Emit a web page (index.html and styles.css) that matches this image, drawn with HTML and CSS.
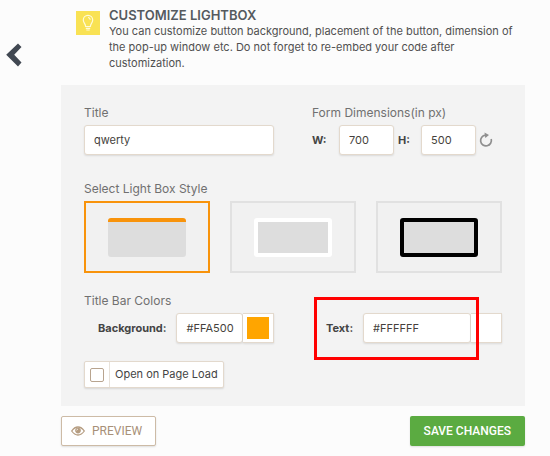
FILE: index.html
```html
<!DOCTYPE html>
<html lang="en">
<head>
<meta charset="utf-8">
<meta name="viewport" content="width=device-width, initial-scale=1">
<title>Customize Lightbox</title>
<link rel="stylesheet" href="styles.css">
</head>
<body>
<div class="page">
  <nav class="side">
    <a class="back" href="#" aria-label="Back">
      <svg width="16" height="24" viewBox="0 0 16 24"><path d="M12 0.5 L15.5 4 L8.2 11.8 L15.5 19.5 L12 23.5 L0.2 11.8 Z" fill="#414852"/></svg>
    </a>
  </nav>
  <main class="content">
    <header class="intro">
      <svg class="bulb" width="24" height="24" viewBox="0 0 24 24" fill="none" stroke="#fffbd8" stroke-width="1.2">
        <rect width="24" height="24" fill="#f9e254" stroke="none"/>
        <path d="M9.6 15.5 C9.6 12.8 7.3 12 7.3 9 A4.7 4.7 0 0 1 16.7 9 C16.7 12 14.4 12.8 14.4 15.5 Z M9.8 17.3 H14.2 M10.3 19 H13.7 M12 6.5 Q14 6.7 14.2 8.8"/>
      </svg>
      <div>
        <h1>CUSTOMIZE LIGHTBOX</h1>
        <p>You can customize button background, placement of the button, dimension of the pop-up window etc. Do not forget to re-embed your code after customization.</p>
      </div>
    </header>
    <form id="lightbox" class="panel">
      <div class="columns">
        <div>
          <label class="caption" for="title">Title</label>
          <input class="field" id="title" type="text" value="qwerty">
        </div>
        <div>
          <span class="caption">Form Dimensions(in px)</span>
          <div class="dimensions">
            <label for="w">W:</label>
            <input class="field" id="w" type="text" value="700">
            <label for="h">H:</label>
            <input class="field" id="h" type="text" value="500">
            <button class="reset" type="button" aria-label="Reset dimensions">
              <svg width="14" height="16" viewBox="0 0 14 16"><path d="M6.5 3.1 A5.4 5.4 0 1 0 12.2 7" fill="none" stroke="#8f8f8f" stroke-width="1.7"/><path d="M5.5 0.5 L10 3 L6.3 6 Z" fill="#8f8f8f"/></svg>
            </button>
          </div>
        </div>
      </div>
      <div class="section">
        <span class="caption">Select Light Box Style</span>
        <div class="styles">
          <button class="style selected" type="button" aria-label="Title bar"><span class="sample bar"></span></button>
          <button class="style" type="button" aria-label="White frame"><span class="sample white"></span></button>
          <button class="style" type="button" aria-label="Black frame"><span class="sample black"></span></button>
        </div>
      </div>
      <div class="section colors">
        <span class="caption">Title Bar Colors</span>
        <div class="columns">
          <div class="color">
            <label for="bg">Background:</label>
            <input class="field" id="bg" type="text" value="#FFA500">
            <button class="swatch" type="button" aria-label="Pick background color"><span class="chip orange"></span></button>
          </div>
          <div class="color marked">
            <label for="fg">Text:</label>
            <input class="field" id="fg" type="text" value="#FFFFFF">
            <button class="swatch" type="button" aria-label="Pick text color"><span class="chip"></span></button>
          </div>
        </div>
      </div>
      <label class="toggle"><span class="tick"><input type="checkbox"></span><span class="toggle-text">Open on Page Load</span></label>
    </form>
    <footer class="actions">
      <button class="preview" type="button">
        <svg width="14" height="10" viewBox="0 0 14 10"><path d="M0.7 5 Q3.5 1 7 1 T13.3 5 Q10.5 9 7 9 T0.7 5 Z" fill="none" stroke="#b59c80" stroke-width="1.3"/><circle cx="7" cy="4.6" r="2.8" fill="#b59c80"/><path d="M5.6 4.5 Q5.7 3.2 7 3.1" fill="none" stroke="#fff" stroke-width="0.7"/></svg>
        PREVIEW
      </button>
      <button class="save" type="submit" form="lightbox">SAVE CHANGES</button>
    </footer>
  </main>
</div>
</body>
</html>
```
FILE: styles.css
```css
* { box-sizing: border-box; }
body {
  margin: 0;
  background: #fcfcfc;
  color: #444;
  font: 11px/16px Inter, Roboto, sans-serif;
}
input, button { font: inherit; color: inherit; margin: 0; padding: 0; }
svg { display: block; flex: none; }
.page { display: grid; grid-template-columns: 61px minmax(0, 1fr); padding-right: 25px; }
.side { padding: 43px 0 0 6px; }
.back { display: inline-block; }
.intro { display: flex; gap: 9px; padding: 8px 8px 14px 15px; }
.bulb { margin-top: 3px; }
h1 { margin: 0; font-size: 13px; line-height: 15px; font-weight: 600; color: #555a5f; }
p { margin: 0; color: #505050; }
.panel { background: #f3f3f3; padding: 20px 23px 18px; }
.columns { display: grid; grid-template-columns: 1fr 1fr; column-gap: 38px; }
.caption { display: block; font-size: 12px; line-height: 16px; margin-bottom: 4px; color: #707070; }
.field {
  width: 100%;
  min-width: 0;
  height: 30px;
  padding: 0 9px;
  border: 1px solid #e3d9cd;
  border-radius: 3px;
  background: #fff;
  box-shadow: 0 1px 2px rgba(0, 0, 0, .1);
  color: #453f3c;
}
.dimensions { display: grid; grid-template-columns: 27px 55px 27px 55px 1fr; align-items: center; }
.dimensions label, .color label { font-weight: 700; color: #444; }
.dimensions .field + label { padding-left: 4px; }
.reset { justify-self: start; margin-left: 3px; border: 0; background: none; }
.section { margin-top: 26px; }
.styles { display: grid; grid-template-columns: repeat(3, 1fr); gap: 20px; }
.style {
  height: 72px;
  display: flex;
  align-items: center;
  justify-content: center;
  background: #f1f1f1;
  border: 2px solid #e1e1e1;
}
.style.selected { border-color: #f8930b; }
.sample { width: 78px; height: 39px; background: #ddd; border-radius: 3px; }
.bar { border-top: 4px solid #f8930b; }
.white { border: 4px solid #fff; }
.black { border: 4px solid #000; }
.colors { margin-top: 20px; }
.color { display: flex; align-items: center; position: relative; padding-left: 14px; }
.color label { flex: none; margin-right: 10px; }
.color .field { flex: 1; padding-right: 0; }
.swatch {
  flex: none;
  width: 31px;
  height: 30px;
  padding: 3px;
  border: 1px solid #e3d9cd;
  border-left: 0;
  background: #fff;
  box-shadow: 0 1px 2px rgba(0, 0, 0, .1);
}
.chip { display: block; width: 22px; height: 22px; margin: auto; }
.orange { background: #ffa500; }
.marked::after {
  content: "";
  position: absolute;
  inset: -16px 23px -17px 2px;
  border: 3px solid #f00;
  pointer-events: none;
}
.toggle {
  display: inline-flex;
  height: 27px;
  margin-top: 18px;
  border: 1px solid #e3d9cd;
  border-radius: 2px;
  background: #fff;
  box-shadow: 0 1px 2px rgba(0, 0, 0, .12);
  vertical-align: top;
}
.tick { display: flex; align-items: center; padding: 0 5px; border-right: 1px solid #e8e2da; }
.tick input { appearance: none; width: 14px; height: 14px; border: 1px solid #b8a48f; border-radius: 2px; background: #fff; }
.toggle-text { padding: 0 5px; line-height: 25px; }
.actions { display: flex; justify-content: space-between; padding: 10px 0; }
.actions button { height: 30px; border-radius: 2px; font-family: Roboto, sans-serif; font-size: 12px; box-shadow: 0 1px 2px rgba(0, 0, 0, .12); }
.preview { display: flex; align-items: center; gap: 7px; padding: 0 13px 0 9px; border: 1px solid #cdbba6; background: #fff; color: #a89078; }
.actions .save { padding: 0 14px; border: 0; background: #5bab41; color: #fff; font-weight: 500; }
```
